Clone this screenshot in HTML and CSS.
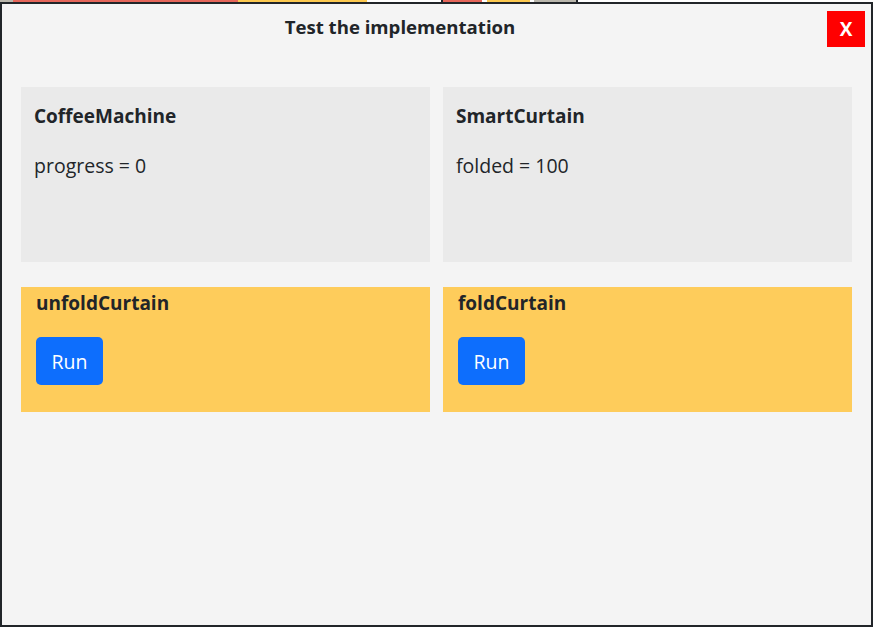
FILE: index.html
```html
<!DOCTYPE html>
<html>
<head>
<meta charset="utf-8">
<link rel="stylesheet" href="styles.css">
</head>
<body>
<div class="app-strip">
  <span class="seg seg-grey1"></span>
  <span class="seg seg-red1"></span>
  <span class="seg seg-yellow1"></span>
  <span class="seg seg-white1"></span>
  <span class="seg seg-dark1"></span>
  <span class="seg seg-red2"></span>
  <span class="seg seg-dark2"></span>
  <span class="seg seg-yellow2"></span>
  <span class="seg seg-dark3"></span>
  <span class="seg seg-grey2"></span>
  <span class="seg seg-dark4"></span>
</div>
<div class="modal">
  <div class="modal-header">
    <h5 class="modal-title">Test the implementation</h5>
    <button class="close-btn">X</button>
  </div>
  <div class="grid">
    <div class="state-card">
      <div class="card-title">CoffeeMachine</div>
      <div class="card-value">progress = 0</div>
    </div>
    <div class="state-card">
      <div class="card-title">SmartCurtain</div>
      <div class="card-value">folded = 100</div>
    </div>
    <div class="action-card">
      <div class="action-title">unfoldCurtain</div>
      <button class="run-btn">Run</button>
    </div>
    <div class="action-card">
      <div class="action-title">foldCurtain</div>
      <button class="run-btn">Run</button>
    </div>
  </div>
</div>
</body>
</html>
```
FILE: styles.css
```css
html, body {
  margin: 0;
  padding: 0;
  background: #ffffff;
  font-family: "Open Sans", "Noto Sans", sans-serif;
  color: #212529;
}
.app-strip {
  display: flex;
  height: 4px;
}
.seg { display: block; height: 100%; }
.seg-grey1 { width: 13px; background: #b9b6ac; }
.seg-red1 { width: 225px; background: #e6665a; }
.seg-yellow1 { width: 129px; background: #fdc94f; }
.seg-white1 { width: 74px; background: #ffffff; }
.seg-dark1 { width: 2px; background: #212529; }
.seg-red2 { width: 39px; background: #e6665a; }
.seg-dark2 { width: 5px; background: #ffffff; }
.seg-yellow2 { width: 43px; background: #fdc94f; }
.seg-dark3 { width: 4px; background: #ffffff; }
.seg-grey2 { width: 42px; background: #b9b6ac; }
.seg-dark4 { width: 2px; background: #212529; }

.modal {
  position: fixed;
  top: 2px;
  left: 0;
  width: 873px;
  height: 625px;
  box-sizing: border-box;
  border: 2px solid #212529;
  background: #f4f4f4;
}
.modal-header {
  display: flex;
  align-items: flex-start;
  padding: 7px 6px 0 0;
}
.modal-title {
  flex: 1;
  margin: 0;
  text-align: center;
  font-size: 18.6px;
  font-weight: 700;
  line-height: 28px;
  padding-top: 2px;
}
.close-btn {
  margin-left: 29px;
  width: 38px;
  height: 36px;
  border: none;
  background: #ff0000;
  color: #ffffff;
  font-family: "Open Sans", sans-serif;
  font-weight: 700;
  font-size: 19px;
  padding: 0;
}
.grid {
  display: grid;
  grid-template-columns: 409px 409px;
  column-gap: 13px;
  row-gap: 25px;
  padding: 40px 19px 0 19px;
}
.state-card {
  background: #eaeaea;
  height: 175px;
  box-sizing: border-box;
  padding: 15px 13px;
}
.card-title {
  font-size: 19px;
  font-weight: 700;
  line-height: 28px;
  margin-bottom: 22px;
}
.card-value {
  font-size: 19.5px;
  line-height: 28px;
}
.action-card {
  background: #fecc5b;
  height: 125px;
  box-sizing: border-box;
  padding: 2px 15px;
}
.action-title {
  font-size: 19px;
  font-weight: 700;
  line-height: 28px;
  margin-bottom: 20px;
}
.run-btn {
  width: 67px;
  height: 48px;
  border: none;
  border-radius: 5px;
  background: #0d6efd;
  color: #ffffff;
  font-family: "Open Sans", sans-serif;
  font-size: 19.5px;
  padding: 0;
}
```
